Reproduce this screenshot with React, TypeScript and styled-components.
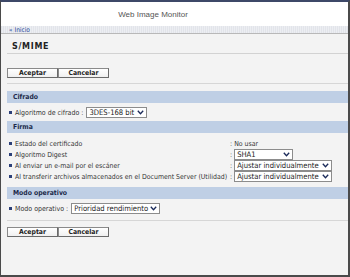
import React from 'react';
import styled, { createGlobalStyle } from 'styled-components';

const GlobalStyle = createGlobalStyle`
  html, body {
    margin: 0;
    padding: 0;
    background: #ffffff;
  }
`;

const Frame = styled.div`
  box-sizing: border-box;
  width: 350px;
  height: 277px;
  display: flex;
  flex-direction: column;
  border-left: 1px solid #4a4a4a;
  border-right: 2px solid #4a4a4a;
  border-top: 2px solid #3d4868;
  border-bottom: 2px solid #4a4a4a;
  font-family: 'DejaVu Sans Condensed', 'DejaVu Sans', sans-serif;
  font-stretch: condensed;
  color: #222;
  overflow: hidden;
`;

const Header = styled.div`
  height: 24px;
  background: #ffffff;
  display: flex;
  align-items: center;
  justify-content: center;
  padding-right: 43px;
  font-family: 'Liberation Sans', Arial, sans-serif;
  font-stretch: normal;
  font-size: 8px;
  color: #555;
`;

const Breadcrumb = styled.div`
  height: 7px;
  display: flex;
  align-items: center;
  padding-left: 8px;
  background: repeating-linear-gradient(90deg, #e2e4ea 0 1px, #eceef2 1px 2px);
  border-bottom: 1px solid #b8b8b8;
  font-size: 6.5px;
  color: #2a4aa0;
`;

const Content = styled.div`
  flex: 1;
  background: #f3f3f3;
  padding-left: 6px;
  padding-top: 5px;
`;

const PageTitle = styled.div`
  height: 14px;
  display: flex;
  align-items: center;
  padding-left: 5px;
  font-family: 'DejaVu Sans', sans-serif;
  font-stretch: normal;
  font-weight: bold;
  font-size: 8px;
  letter-spacing: 0.7px;
  color: #222;
  border-bottom: 1px solid #d2d2d2;
`;

const ButtonBar = styled.div<{ $top: number; $divider?: boolean }>`
  display: flex;
  padding-top: ${p => p.$top}px;
  padding-bottom: ${p => (p.$divider ? 5 : 0)}px;
  border-bottom: ${p => (p.$divider ? '1px solid #d6d6d6' : 'none')};
`;

const Divider = styled.div`
  margin-top: 6px;
  border-bottom: 1px solid #d6d6d6;
`;

const Button = styled.div`
  box-sizing: border-box;
  width: 51px;
  height: 10px;
  display: flex;
  align-items: center;
  justify-content: center;
  background: linear-gradient(#ffffff, #f0f0f0);
  border: 1px solid #8a8a8a;
  border-right-color: #6a6a6a;
  border-bottom-color: #6a6a6a;
  font-size: 6.8px;
  font-weight: bold;
  color: #222;
`;

const SectionHeader = styled.div<{ $top: number }>`
  margin-top: ${p => p.$top}px;
  height: 12px;
  display: flex;
  align-items: center;
  padding-left: 6px;
  background: #bfcfe5;
  font-size: 6.8px;
  font-weight: bold;
  color: #1c2a4a;
`;

const InlineRow = styled.div`
  display: flex;
  align-items: center;
  height: 11px;
  margin-top: 4px;
  padding-left: 2px;
  font-size: 7px;
  color: #333;
  gap: 3px;
`;

const Bullet = styled.span`
  width: 3px;
  height: 3px;
  background: #2b3f78;
  flex-shrink: 0;
`;

const Label = styled.span`
  display: flex;
  align-items: center;
  gap: 3px;
  white-space: nowrap;
`;

const Grid = styled.div`
  display: grid;
  grid-template-columns: auto 1fr;
  column-gap: 3px;
  margin-top: 5px;
  padding-left: 2px;
  font-size: 6.9px;
  color: #333;
`;

const Cell = styled.div`
  height: 11px;
  display: flex;
  align-items: center;
  gap: 2px;
  white-space: nowrap;
`;

const Select = styled.div<{ $w: number }>`
  box-sizing: border-box;
  width: ${p => p.$w}px;
  height: 11px;
  display: flex;
  align-items: center;
  justify-content: space-between;
  padding: 0 2px 0 2px;
  background: #ffffff;
  border: 1px solid #8c8c8c;
  font-size: 7.6px;
  color: #222;
  white-space: nowrap;
`;

const Chevron = () => (
  <svg width="7" height="5" viewBox="0 0 7 5">
    <path d="M0.8 0.8 L3.5 3.8 L6.2 0.8" fill="none" stroke="#1a2a5a" strokeWidth="1.3" />
  </svg>
);

const Dropdown = ({ w, value }: { w: number; value: string }) => (
  <Select $w={w}>
    <span>{value}</span>
    <Chevron />
  </Select>
);

const firma = [
  { label: 'Estado del certificado', value: null, text: 'No usar' },
  { label: 'Algoritmo Digest', value: 'SHA1', w: 59 },
  { label: 'Al enviar un e-mail por el escáner', value: 'Ajustar individualmente', w: 98 },
  { label: 'Al transferir archivos almacenados en el Document Server (Utilidad)', value: 'Ajustar individualmente', w: 98 },
];

const App = () => {
  return (
    <>
      <GlobalStyle />
      <Frame>
        <Header>Web Image Monitor</Header>
        <Breadcrumb>« Inicio</Breadcrumb>
        <Content>
          <PageTitle>S/MIME</PageTitle>
          <ButtonBar $top={14} $divider>
            <Button>Aceptar</Button>
            <Button>Cancelar</Button>
          </ButtonBar>

          <SectionHeader $top={7}>Cifrado</SectionHeader>
          <InlineRow>
            <Bullet />
            <span>Algoritmo de cifrado :</span>
            <Dropdown w={61} value="3DES-168 bit" />
          </InlineRow>

          <SectionHeader $top={3}>Firma</SectionHeader>
          <Grid>
            {firma.map(r => (
              <React.Fragment key={r.label}>
                <Cell>
                  <Label>
                    <Bullet />
                    {r.label}
                  </Label>
                </Cell>
                <Cell>
                  :{r.value ? <Dropdown w={r.w!} value={r.value} /> : <span>{r.text}</span>}
                </Cell>
              </React.Fragment>
            ))}
          </Grid>

          <SectionHeader $top={5}>Modo operativo</SectionHeader>
          <InlineRow>
            <Bullet />
            <span>Modo operativo :</span>
            <Dropdown w={89} value="Prioridad rendimiento" />
          </InlineRow>
          <Divider />
          <ButtonBar $top={6}>
            <Button>Aceptar</Button>
            <Button>Cancelar</Button>
          </ButtonBar>
        </Content>
      </Frame>
    </>
  );
};

export default App;
